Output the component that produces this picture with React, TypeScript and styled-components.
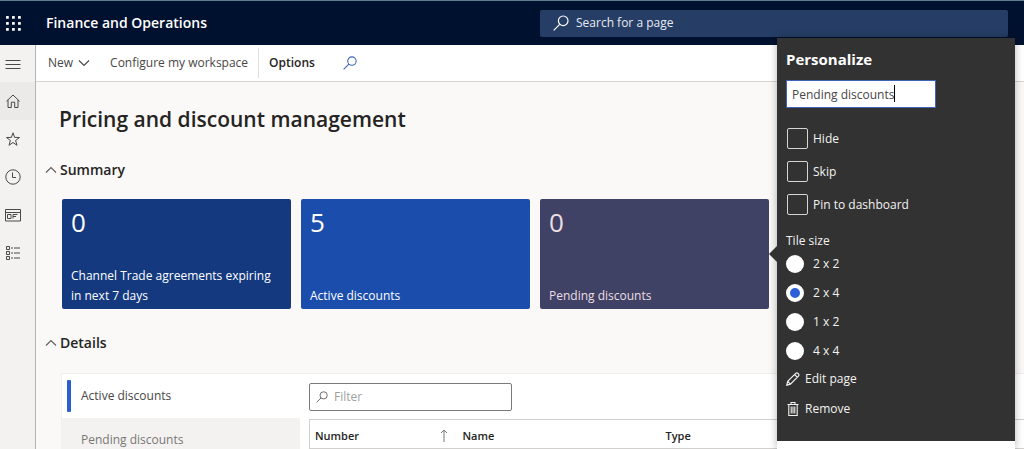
import React from 'react';
import styled, { createGlobalStyle, css } from 'styled-components';

const GlobalStyle = createGlobalStyle`
  *, *::before, *::after { box-sizing: border-box; }
  body {
    margin: 0;
    background: #faf9f8;
    color: #323130;
    font: 12px/18px "Open Sans", "Noto Sans", sans-serif;
  }
  button, input { font: inherit; color: inherit; }
  h1, h2, p, ul, fieldset { margin: 0; padding: 0; border: 0; }
  a { color: inherit; text-decoration: none; }
`;

const Page = styled.div`
  position: relative;
  display: flex;
  flex-direction: column;
  min-height: 100vh;
`;

const Header = styled.header`
  display: flex;
  align-items: center;
  height: 45px;
  padding-right: 16px;
  border-top: 1px solid #5f7f8f;
  background: #00112f;
  color: #fff;
`;

const IconButton = styled.button`
  display: flex;
  align-items: center;
  justify-content: center;
  padding: 0;
  border: 0;
  background: none;
`;

const WaffleButton = styled(IconButton)`
  width: 26px;
  height: 44px;
`;

const Brand = styled.a`
  flex: 1;
  padding-left: 20px;
  font-size: 14px;
  font-weight: 600;
`;

const GlobalSearch = styled.label`
  display: flex;
  align-items: center;
  gap: 7px;
  width: 47%;
  max-width: 468px;
  height: 27px;
  padding-left: 13px;
  border-radius: 2px;
  background: #263e66;
`;

const BareInput = styled.input<{ $hint: string }>`
  flex: 1;
  min-width: 0;
  padding: 0;
  border: 0;
  outline: 0;
  background: none;
  &::placeholder { color: ${(p) => p.$hint}; opacity: 1; }
`;

const Body = styled.div`
  display: flex;
  flex: 1;
`;

const Rail = styled.nav`
  display: flex;
  flex-direction: column;
  width: 36px;
  border-right: 1px solid #b5b4b3;
  background: #f3f2f1;
  color: #4a4948;
`;

const RailButton = styled(IconButton)<{ $active?: boolean }>`
  height: 38px;
  padding-right: 9px;
  background: ${(p) => (p.$active ? '#ebeae9' : 'none')};
  &:first-child { height: 37px; }
`;

const Main = styled.main`
  display: flex;
  flex: 1;
  flex-direction: column;
  min-width: 0;
`;

const Toolbar = styled.div`
  display: flex;
  align-items: center;
  height: 37px;
  padding-left: 12px;
  border-bottom: 1px solid #d6d5d4;
  background: #fff;
`;

const ToolButton = styled.button<{ $strong?: boolean }>`
  display: flex;
  align-items: center;
  gap: 5px;
  height: 24px;
  padding: 0;
  border: 0;
  background: none;
  color: ${(p) => (p.$strong ? '#252423' : '#484644')};
  font-weight: ${(p) => (p.$strong ? 600 : 400)};
`;

const ToolGroup = styled.div`
  display: flex;
  align-items: center;
  gap: 20px;
  height: 30px;
  padding-right: 10px;
  & + & {
    gap: 28px;
    padding-left: 10px;
    border-left: 1px solid #e1dfdd;
  }
`;

const Content = styled.div`
  display: flex;
  flex: 1;
  flex-direction: column;
  padding: 22px 0 0 9px;
`;

const Title = styled.h1`
  padding-left: 14px;
  color: #252423;
  font-size: 21px;
  line-height: 30px;
  font-weight: 600;
`;

const SectionTitle = styled.h2`
  display: flex;
  align-items: center;
  gap: 3px;
  height: 20px;
  color: #252423;
  font-size: 14px;
  font-weight: 600;
`;

const Summary = styled.section`
  padding-top: 26px;
`;

const Details = styled.section`
  display: flex;
  flex: 1;
  flex-direction: column;
  padding-top: 24px;
`;

const Tiles = styled.div`
  display: flex;
  gap: 10px;
  padding: 19px 0 0 17px;
`;

const Tile = styled.button<{ $bg: string; $fg?: string }>`
  display: flex;
  flex-direction: column;
  justify-content: space-between;
  flex: none;
  width: 229px;
  height: 110px;
  padding: 7px 9px 3px;
  border: 0;
  border-radius: 2px;
  background: ${(p) => p.$bg};
  color: ${(p) => p.$fg ?? '#fff'};
  text-align: left;
`;

const TileCount = styled.span`
  font-size: 26px;
  line-height: 32px;
`;

const TileLabel = styled.span`
  line-height: 20px;
`;

const Panel = styled.div`
  display: flex;
  flex: 1;
  margin: 20px 0 0 16px;
  border-top: 1px solid #f0efee;
  border-left: 1px solid #f0efee;
  background: #fff;
`;

const Tabs = styled.div`
  display: flex;
  flex-direction: column;
  width: 238px;
  background: #f3f2f1;
`;

const Tab = styled.button<{ $active?: boolean }>`
  display: flex;
  align-items: center;
  gap: 10px;
  height: ${(p) => (p.$active ? 44 : 31)}px;
  padding: ${(p) => (p.$active ? '0 5px' : '13px 5px 0')};
  border: 0;
  background: ${(p) => (p.$active ? '#fff' : 'none')};
  color: ${(p) => (p.$active ? '#484644' : '#797775')};
  &::before {
    content: "";
    width: 4px;
    height: ${(p) => (p.$active ? 32 : 0)}px;
    border-radius: 1px;
    background: #2b60ce;
  }
`;

const ListArea = styled.div`
  display: flex;
  flex: 1;
  flex-direction: column;
  gap: 8px;
  min-width: 0;
  padding: 9px 0 0 9px;
`;

const FilterBox = styled.label`
  display: flex;
  align-items: center;
  gap: 6px;
  width: 203px;
  height: 28px;
  padding-left: 6px;
  border: 1px solid #7b7a79;
  border-radius: 2px;
`;

const Grid = styled.table`
  width: 100%;
  border-collapse: collapse;
  table-layout: fixed;
  border: 1px solid #d2d0ce;
  border-right: 0;
`;

const HeadCell = styled.th<{ $width?: number }>`
  width: ${(p) => (p.$width ? `${p.$width}px` : 'auto')};
  height: 29px;
  padding: 3px 5px 0;
  color: #252423;
  font-size: 11px;
  font-weight: 600;
  text-align: left;
`;

const HeadContent = styled.span`
  display: flex;
  align-items: center;
  justify-content: space-between;
  padding-right: 5px;
`;

const Flyout = styled.aside`
  position: absolute;
  top: 38px;
  right: 9px;
  bottom: 0;
  width: 238px;
  border-bottom: 8px solid #fff;
  background: #323232;
  box-shadow: 0 0 8px rgba(0, 0, 0, 0.3);
  color: #f3f2f1;
  padding: 10px 9px 0;
`;

const Pointer = styled.span`
  position: absolute;
  top: 208px;
  left: -8px;
  border: solid transparent;
  border-width: 8px 8px 8px 0;
  border-right-color: #323232;
`;

const FlyoutTitle = styled.h2`
  color: #fff;
  font-size: 15px;
  line-height: 22px;
  font-weight: 700;
`;

const NameField = styled.div`
  position: relative;
  width: 150px;
  margin-top: 10px;
`;

const NameInput = styled.input`
  display: block;
  width: 100%;
  height: 28px;
  padding: 0 5px;
  border: 1px solid #3f63b8;
  outline: 0;
  background: #fff;
  color: #484644;
`;

const Caret = styled.span`
  position: absolute;
  top: 5px;
  left: 108px;
  width: 1px;
  height: 17px;
  background: #000;
`;

const Checks = styled.div`
  display: flex;
  flex-direction: column;
  gap: 12px;
  padding-top: 20px;
`;

const Radios = styled.fieldset`
  display: flex;
  flex-direction: column;
  gap: 11px;
  legend { padding: 17px 0 5px; }
`;

const Option = styled.label<{ $radio?: boolean }>`
  display: flex;
  align-items: center;
  gap: ${(p) => (p.$radio ? 9 : 5)}px;
`;

const box = css`
  appearance: none;
  flex: none;
  margin: 0;
`;

const Check = styled.input.attrs({ type: 'checkbox' })`
  ${box}
  width: 21px;
  height: 21px;
  margin-left: 1px;
  border: 1px solid #d6d5d4;
  border-radius: 2px;
`;

const Radio = styled.input.attrs({ type: 'radio' })`
  ${box}
  width: 18px;
  height: 18px;
  border-radius: 50%;
  background: #fff;
  &:checked { border: 4px solid #fff; background: #2b60d8; }
`;

const Actions = styled.div`
  display: flex;
  flex-direction: column;
  align-items: flex-start;
  gap: 10px;
  padding-top: 9px;
`;

const Action = styled.button`
  display: flex;
  align-items: center;
  gap: 5px;
  height: 20px;
  padding: 0;
  border: 0;
  background: none;
`;

const SearchIcon = ({ size, color }: { size: number; color: string }) => (
  <svg width={size} height={size} viewBox="0 0 16 16" fill="none" stroke={color} strokeWidth="1.2" aria-hidden="true">
    <circle cx="10.2" cy="5.8" r="4.8" />
    <path d="M6.7 9.3 .7 15.3" />
  </svg>
);

const Chevron = ({ up, color }: { up?: boolean; color: string }) => (
  <svg width="12" height="8" viewBox="0 0 12 8" fill="none" stroke={color} strokeWidth="1.1" aria-hidden="true">
    <path d={up ? 'M1 6.5 6 1.5l5 5' : 'M1 1.5l5 5 5-5'} />
  </svg>
);

const Waffle = () => (
  <svg width="15" height="15" viewBox="0 0 15 15" fill="#fff" aria-hidden="true">
    {[0, 6, 12].map((y) => [0, 6, 12].map((x) => <rect key={`${x}-${y}`} x={x} y={y} width="2.8" height="2.8" rx="0.6" />))}
  </svg>
);

const Line = ({ children }: { children: React.ReactNode }) => (
  <svg width="16" height="16" viewBox="0 0 16 16" fill="none" stroke="#4a4948" strokeWidth="1" aria-hidden="true">
    {children}
  </svg>
);

const railItems = [
  { name: 'Expand the navigation pane', icon: <path d="M.5 4.5h15M.5 8.5h15M.5 12.5h15" /> },
  { name: 'Home', active: true, icon: <path d="M1.4 8.3 8 2l6.6 6.3M3 7v7.5h3.3V9.2h3.4v5.3H13V7" /> },
  { name: 'Favorites', icon: <path d="m8 1.8 1.6 4.6 4.9.1-3.9 3 1.4 4.8L8 11.5l-4 2.8 1.4-4.8-3.9-3 4.9-.1z" /> },
  { name: 'Recent', icon: <><circle cx="8" cy="8" r="7.2" /><path d="M7.5 3.5v5H11" /></> },
  { name: 'Workspaces', icon: <path d="M.5 2.5h15v11.5H.5zM.5 5.5h15M2.5 7.5h3.5v4H2.5zM8 11.5v-4h4.5M8 9.5h3" /> },
  { name: 'Modules', icon: <path d="M1.5 1.5h3v3h-3zM1.5 6.5h3v3h-3zM1.5 11.5h3v3h-3zM6 3h2M9 3h6M6 8h2M9 8h6M6 13h2M9 13h6" /> },
];

const tiles = [
  { count: 0, label: 'Channel Trade agreements expiring in next 7 days', bg: '#14397f' },
  { count: 5, label: 'Active discounts', bg: '#1b4dac' },
  { count: 0, label: 'Pending discounts', bg: '#3f4165', fg: '#ecdfe2' },
];

export default function App() {
  return (
    <>
      <GlobalStyle />
      <Page>
        <Header>
          <WaffleButton aria-label="App launcher"><Waffle /></WaffleButton>
          <Brand href="#">Finance and Operations</Brand>
          <GlobalSearch>
            <SearchIcon size={16} color="#fff" />
            <BareInput $hint="#e6ebf3" placeholder="Search for a page" aria-label="Search for a page" />
          </GlobalSearch>
        </Header>
        <Body>
          <Rail>
            {railItems.map((item) => (
              <RailButton key={item.name} aria-label={item.name} $active={item.active}>
                <Line>{item.icon}</Line>
              </RailButton>
            ))}
          </Rail>
          <Main>
            <Toolbar>
              <ToolGroup>
                <ToolButton>New <Chevron color="#484644" /></ToolButton>
                <ToolButton>Configure my workspace</ToolButton>
              </ToolGroup>
              <ToolGroup>
                <ToolButton $strong>Options</ToolButton>
                <IconButton aria-label="Search actions"><SearchIcon size={14} color="#3f63b8" /></IconButton>
              </ToolGroup>
            </Toolbar>
            <Content>
              <Title>Pricing and discount management</Title>
              <Summary>
                <SectionTitle><Chevron up color="#605e5c" />Summary</SectionTitle>
                <Tiles>
                  {tiles.map((tile) => (
                    <Tile key={tile.label} $bg={tile.bg} $fg={tile.fg}>
                      <TileCount>{tile.count}</TileCount>
                      <TileLabel>{tile.label}</TileLabel>
                    </Tile>
                  ))}
                </Tiles>
              </Summary>
              <Details>
                <SectionTitle><Chevron up color="#605e5c" />Details</SectionTitle>
                <Panel>
                  <Tabs>
                    <Tab $active>Active discounts</Tab>
                    <Tab>Pending discounts</Tab>
                  </Tabs>
                  <ListArea>
                    <FilterBox>
                      <SearchIcon size={12} color="#605e5c" />
                      <BareInput $hint="#a19f9d" placeholder="Filter" aria-label="Filter" />
                    </FilterBox>
                    <Grid>
                      <thead>
                        <tr>
                          <HeadCell $width={148}>
                            <HeadContent>
                              Number
                              <svg width="8" height="13" viewBox="0 0 8 13" fill="none" stroke="#797775" aria-hidden="true">
                                <path d="M4 13V1M1 4l3-3 3 3" />
                              </svg>
                            </HeadContent>
                          </HeadCell>
                          <HeadCell $width={203}>Name</HeadCell>
                          <HeadCell>Type</HeadCell>
                        </tr>
                      </thead>
                    </Grid>
                  </ListArea>
                </Panel>
              </Details>
            </Content>
          </Main>
        </Body>
        <Flyout aria-label="Personalize">
          <Pointer />
          <FlyoutTitle>Personalize</FlyoutTitle>
          <NameField>
            <NameInput defaultValue="Pending discounts" aria-label="Tile name" />
            <Caret />
          </NameField>
          <Checks>
            {['Hide', 'Skip', 'Pin to dashboard'].map((label) => (
              <Option key={label}><Check />{label}</Option>
            ))}
          </Checks>
          <Radios>
            <legend>Tile size</legend>
            {['2 x 2', '2 x 4', '1 x 2', '4 x 4'].map((size) => (
              <Option key={size} $radio><Radio name="tile-size" defaultChecked={size === '2 x 4'} />{size}</Option>
            ))}
          </Radios>
          <Actions>
            <Action>
              <svg width="14" height="14" viewBox="0 0 14 14" fill="none" stroke="currentColor" strokeWidth="1.2" aria-hidden="true">
                <path d="m.8 13.2.9-3.8 8-8q1.2-1 2.5.2t.2 2.5l-8 8zM8.6 2.5l2.8 2.8M1.7 9.4l2.9 2.9" />
              </svg>
              Edit page
            </Action>
            <Action>
              <svg width="14" height="14" viewBox="0 0 14 14" fill="none" stroke="currentColor" strokeWidth="1.1" aria-hidden="true">
                <path d="M1.5 2.5h11M5 2.5v-2h4v2M2.8 2.5v11h8.4v-11M5.2 4.5v7M7 4.5v7M8.8 4.5v7" />
              </svg>
              Remove
            </Action>
          </Actions>
        </Flyout>
      </Page>
    </>
  );
}
